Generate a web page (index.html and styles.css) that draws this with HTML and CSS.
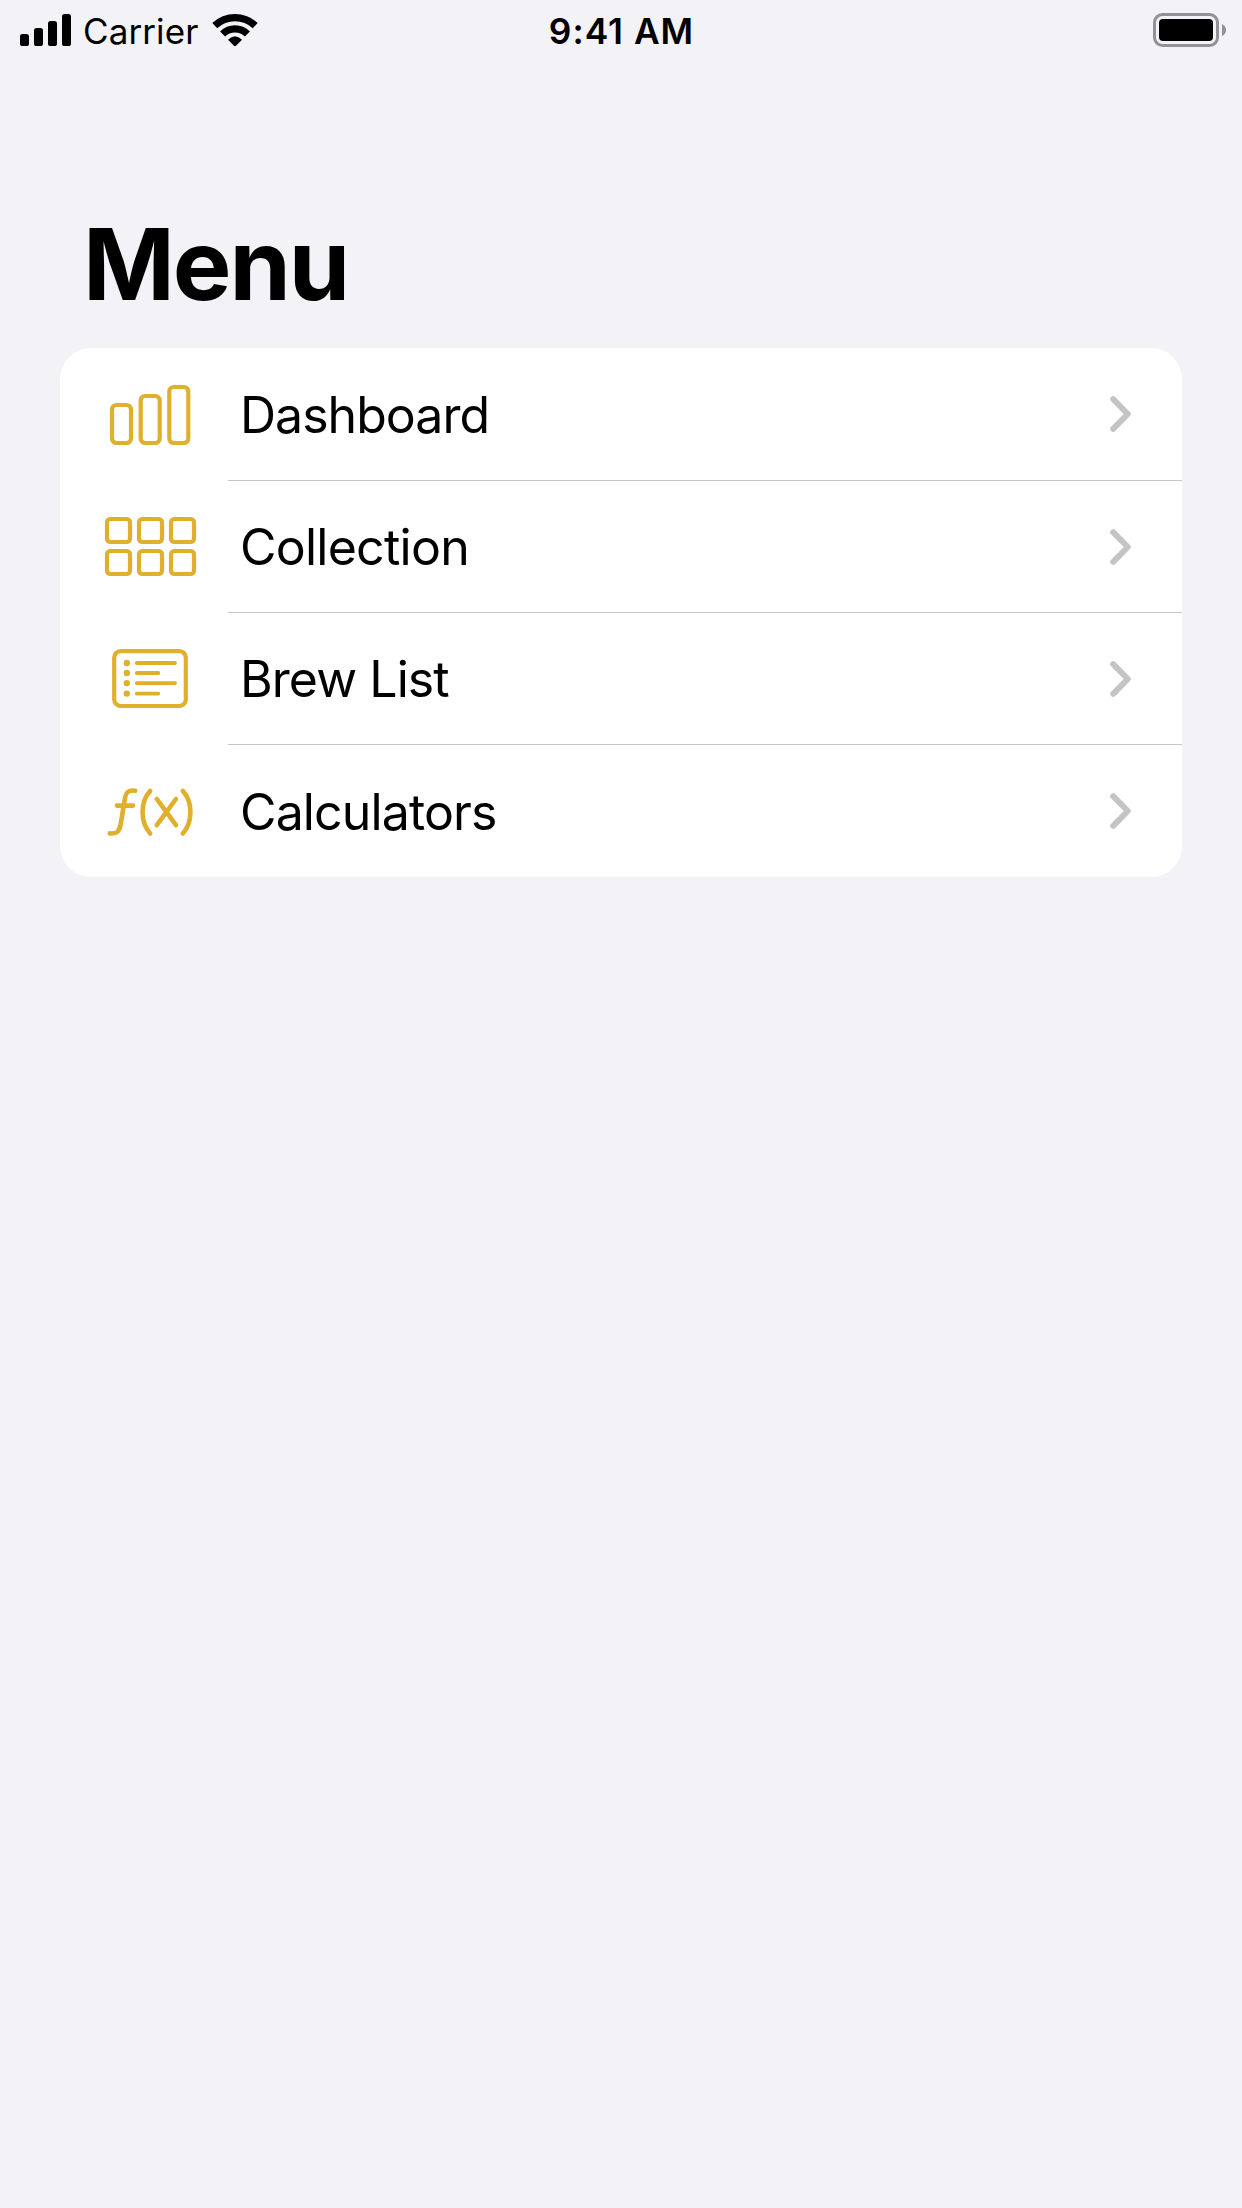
FILE: index.html
```html
<!DOCTYPE html>
<html lang="en">
<head>
<meta charset="utf-8">
<title>Menu</title>
<link rel="stylesheet" href="styles.css">
</head>
<body>
<header class="status-bar">
  <div class="status-left">
    <svg class="signal" width="51" height="32" viewBox="0 0 51 32">
      <rect x="0" y="20" width="9" height="12" rx="2.6"/>
      <rect x="14" y="14" width="9" height="18" rx="2.6"/>
      <rect x="28" y="7" width="9" height="25" rx="2.6"/>
      <rect x="42" y="0" width="9" height="32" rx="2.6"/>
    </svg>
    <span class="carrier">Carrier</span>
    <svg class="wifi" width="46" height="34" viewBox="0 0 46 34">
      <path class="wifi-arc" d="M2.8 12.6A29.5 29.5 0 0 1 43.2 12.6"/>
      <path class="wifi-arc" d="M10.6 21A17.8 17.8 0 0 1 35.4 21"/>
      <path d="M16 26.8Q23 19.6 30 26.8L24 32.8Q23 33.6 22 32.8Z"/>
    </svg>
  </div>
  <time class="clock">9:41 AM</time>
  <div class="status-right">
    <svg class="battery" width="74" height="34" viewBox="0 0 74 34">
      <rect class="battery-case" x="1.5" y="1.5" width="63" height="31" rx="8"/>
      <rect x="6" y="6" width="54" height="22" rx="4"/>
      <path class="battery-tip" d="M69 11Q73 13 73 17Q73 21 69 23Z"/>
    </svg>
  </div>
</header>
<main class="page">
  <h1 class="title">Menu</h1>
  <nav class="card">
    <a class="row">
      <svg class="icon" viewBox="0 0 120 132">
        <rect x="22" y="57" width="19" height="38" rx="4.5"/>
        <rect x="50.7" y="48" width="19" height="47" rx="4.5"/>
        <rect x="79.3" y="39" width="19" height="56" rx="4.5"/>
      </svg>
      <span class="cell"><span class="label label-dashboard">Dashboard</span>
        <svg class="chevron" viewBox="0 0 22 36"><path d="M3.2 3.2L17.8 18L3.2 32.8"/></svg></span>
    </a>
    <a class="row">
      <svg class="icon" viewBox="0 0 120 132">
        <rect x="17" y="39" width="23" height="23" rx="3.4"/>
        <rect x="49" y="39" width="23" height="23" rx="3.4"/>
        <rect x="81" y="39" width="23" height="23" rx="3.4"/>
        <rect x="17" y="71" width="23" height="23" rx="3.4"/>
        <rect x="49" y="71" width="23" height="23" rx="3.4"/>
        <rect x="81" y="71" width="23" height="23" rx="3.4"/>
      </svg>
      <span class="cell"><span class="label label-collection">Collection</span>
        <svg class="chevron" viewBox="0 0 22 36"><path d="M3.2 3.2L17.8 18L3.2 32.8"/></svg></span>
    </a>
    <a class="row">
      <svg class="icon" viewBox="0 0 120 132">
        <rect x="24.2" y="39.2" width="71.6" height="54.8" rx="6.5"/>
        <path class="thin" d="M46.8 51H85M46.8 61H68.3M46.8 71.1H85M46.8 81.6H68.3"/>
        <g class="dots">
          <circle cx="36.8" cy="51" r="3.2"/>
          <circle cx="36.8" cy="61" r="3.2"/>
          <circle cx="36.8" cy="71.1" r="3.2"/>
          <circle cx="36.8" cy="81.6" r="3.2"/>
        </g>
      </svg>
      <span class="cell"><span class="label label-brew">Brew List</span>
        <svg class="chevron" viewBox="0 0 22 36"><path d="M3.2 3.2L17.8 18L3.2 32.8"/></svg></span>
    </a>
    <a class="row row-last">
      <svg class="icon icon-function" viewBox="0 0 120 132">
        <path d="M45.2 46.8C38.5 45.8 36 48 35 54L30.6 80.5C29.3 87.8 26.5 90 19.8 89.4M27 61.6H43"/>
        <path d="M60.2 46.9C50 58 50 78 60.2 89.6M92.8 46.9C103 58 103 78 92.8 89.6"/>
        <path d="M66.8 55L86 81.2M86 55L66.8 81.2"/>
      </svg>
      <span class="cell"><span class="label label-calculators">Calculators</span>
        <svg class="chevron" viewBox="0 0 22 36"><path d="M3.2 3.2L17.8 18L3.2 32.8"/></svg></span>
    </a>
  </nav>
</main>
</body>
</html>
```

FILE: styles.css
```css
* { box-sizing: border-box; }

body {
  margin: 0;
  min-height: 2208px;
  background: #f2f2f7;
  color: #000;
  font-family: Inter, "Liberation Sans", sans-serif;
}

svg { display: block; flex: none; }

.status-bar {
  display: grid;
  grid-template-columns: 1fr auto 1fr;
  height: 60px;
  padding: 0 15px 0 20px;
}

.status-left {
  display: flex;
  align-items: flex-start;
}

.signal { margin-top: 14px; }

.carrier {
  width: 141px;
  padding-left: 12px;
  font-size: 35px;
  line-height: 63px;
  letter-spacing: 0.1px;
}

.wifi { margin-top: 13px; }

.wifi-arc {
  fill: none;
  stroke: #000;
  stroke-width: 7.2;
}

.clock {
  margin-left: -4px;
  font-size: 35.3px;
  font-weight: 570;
  line-height: 63px;
  letter-spacing: 1px;
}

.status-right {
  display: flex;
  justify-content: flex-end;
  align-items: flex-start;
}

.battery { margin-top: 13px; }

.battery-case {
  fill: none;
  stroke: #929195;
  stroke-width: 3;
}

.battery-tip { fill: #929195; }

.page { padding: 0 60px; }

.title {
  margin: 0;
  height: 288px;
  padding: 144px 0 0 23px;
  font-size: 98.6px;
  font-weight: 670;
  line-height: 120px;
  letter-spacing: -2.1px;
}

.card {
  padding-left: 30px;
  overflow: hidden;
  border-radius: 31px;
  background: #fff;
}

.row {
  display: flex;
  height: 132px;
}

.row-last { height: 133px; }

.icon {
  width: 120px;
  height: 132px;
  fill: none;
  stroke: #e0b02c;
  stroke-width: 4.2;
  stroke-linecap: round;
  stroke-linejoin: round;
}

.icon-function { stroke-width: 4.6; }

.thin { stroke-width: 3.8; }

.dots {
  fill: #e0b02c;
  stroke: none;
}

.cell {
  display: flex;
  flex: 1;
  justify-content: space-between;
  align-items: center;
  margin-left: 18px;
  padding: 0 50px 0 12px;
  border-top: 1px solid #c6c6c8;
}

.row:first-child .cell { border-top-color: transparent; }

.label {
  padding-top: 1px;
  font-size: 50px;
  line-height: 60px;
}

.row-last .label { padding-top: 2px; }

.label-dashboard { letter-spacing: -0.98px; }
.label-collection { letter-spacing: -0.75px; }
.label-brew { letter-spacing: -0.93px; }
.label-calculators { letter-spacing: -0.87px; }

.chevron {
  width: 22px;
  height: 36px;
  fill: none;
  stroke: #c4c4c6;
  stroke-width: 6px;
  stroke-linecap: round;
  stroke-linejoin: round;
}

.row:first-child .chevron { margin-bottom: 1px; }
```
